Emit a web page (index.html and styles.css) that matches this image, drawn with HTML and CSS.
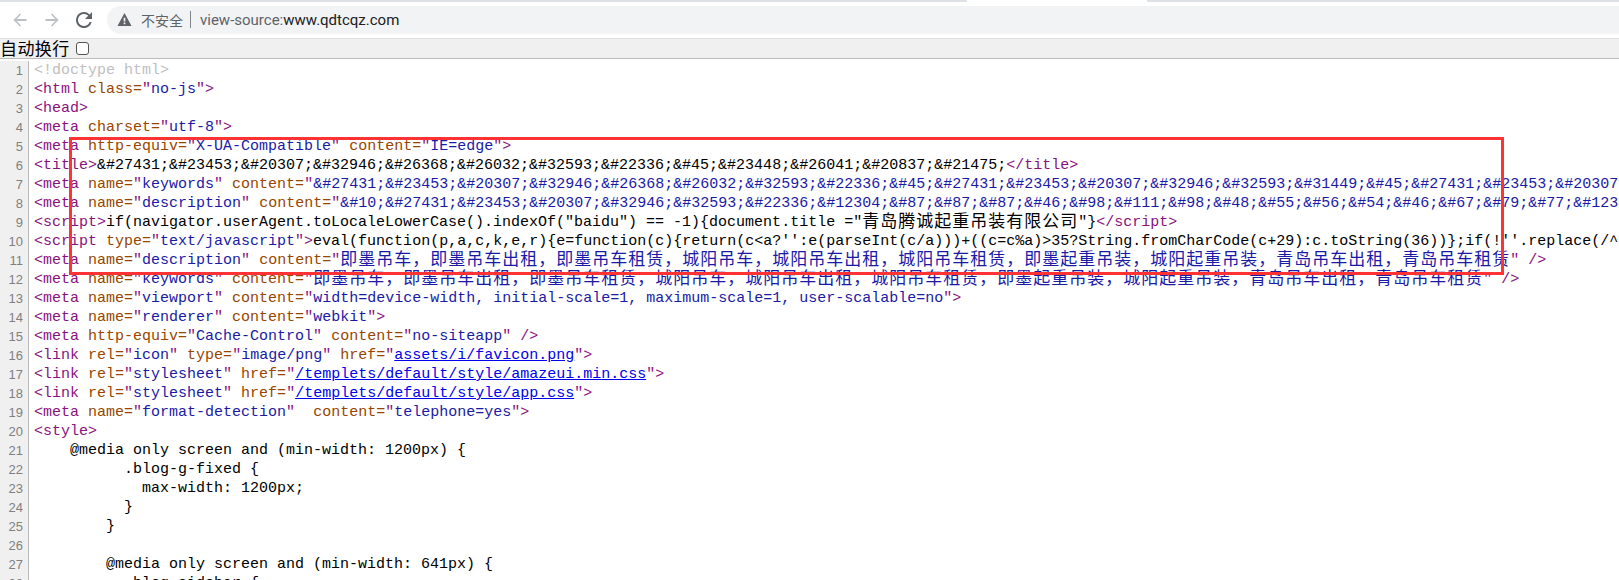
FILE: index.html
```html
<!DOCTYPE html>
<html lang="zh">
<head>
<meta charset="utf-8">
<title>view-source</title>
<link rel="stylesheet" href="styles.css">
</head>
<body>
<div class="tabstrip"><div class="tabgap"></div></div>
<header class="toolbar">
  <svg class="nav" viewBox="0 0 16 16"><path class="muted" d="M14.5 7H4.6l4.5-4.5L8 1.4 1.4 8 8 14.6l1.1-1.1L4.6 9h9.9z"/></svg>
  <svg class="nav" viewBox="0 0 16 16"><path class="muted" d="M1.5 7h9.9L6.9 2.500 8 1.400 14.600 8 8 14.600 6.900 13.500 11.400 9H1.500z"/></svg>
  <svg class="nav" viewBox="0 0 16 16"><path class="dark" d="M13.600 2.400A7.900 7.900 0 0 0 8 0a8 8 0 1 0 7.700 10h-2.100A6 6 0 1 1 8 2c1.700 0 3.100.7 4.200 1.800L9 7h7V0z"/></svg>
  <div class="omnibox">
    <svg class="warn" viewBox="0 0 16 16"><path class="dark" d="M8 1 .5 15h15zM8.900 13H7.100v-1.800h1.800zm0-3H7.100V6h1.800z" fill-rule="evenodd"/></svg>
    <span class="insecure">不安全</span>
    <span class="sep"></span>
    <span class="url"><span class="scheme">view-source:</span>www.qdtcqz.com</span>
  </div>
</header>
<form class="wrapbar"><label class="wraplabel">自动换行 <input class="wrapcheck" type="checkbox"></label></form>
<main class="source">
<div class="row"><span class="num">1</span><span class="code"><span class="c">&lt;!doctype html&gt;</span></span></div>
<div class="row"><span class="num">2</span><span class="code"><span class="t">&lt;html</span> <span class="a">class=</span><span class="t">"</span><span class="v">no-js</span><span class="t">"&gt;</span></span></div>
<div class="row"><span class="num">3</span><span class="code"><span class="t">&lt;head&gt;</span></span></div>
<div class="row"><span class="num">4</span><span class="code"><span class="t">&lt;meta</span> <span class="a">charset=</span><span class="t">"</span><span class="v">utf-8</span><span class="t">"&gt;</span></span></div>
<div class="row"><span class="num">5</span><span class="code"><span class="t">&lt;meta</span> <span class="a">http-equiv=</span><span class="t">"</span><span class="v">X-UA-Compatible</span><span class="t">"</span> <span class="a">content=</span><span class="t">"</span><span class="v">IE=edge</span><span class="t">"&gt;</span></span></div>
<div class="row"><span class="num">6</span><span class="code"><span class="t">&lt;title&gt;</span>&amp;#27431;&amp;#23453;&amp;#20307;&amp;#32946;&amp;#26368;&amp;#26032;&amp;#32593;&amp;#22336;&amp;#45;&amp;#23448;&amp;#26041;&amp;#20837;&amp;#21475;<span class="t">&lt;/title&gt;</span></span></div>
<div class="row"><span class="num">7</span><span class="code"><span class="t">&lt;meta</span> <span class="a">name=</span><span class="t">"</span><span class="v">keywords</span><span class="t">"</span> <span class="a">content=</span><span class="t">"</span><span class="v">&amp;#27431;&amp;#23453;&amp;#20307;&amp;#32946;&amp;#26368;&amp;#26032;&amp;#32593;&amp;#22336;&amp;#45;&amp;#27431;&amp;#23453;&amp;#20307;&amp;#32946;&amp;#32593;&amp;#31449;&amp;#45;&amp;#27431;&amp;#23453;&amp;#20307;&amp;#32946;</span></span></div>
<div class="row"><span class="num">8</span><span class="code"><span class="t">&lt;meta</span> <span class="a">name=</span><span class="t">"</span><span class="v">description</span><span class="t">"</span> <span class="a">content=</span><span class="t">"</span><span class="v">&amp;#10;&amp;#27431;&amp;#23453;&amp;#20307;&amp;#32946;&amp;#32593;&amp;#22336;&amp;#12304;&amp;#87;&amp;#87;&amp;#87;&amp;#46;&amp;#98;&amp;#111;&amp;#98;&amp;#48;&amp;#55;&amp;#56;&amp;#54;&amp;#46;&amp;#67;&amp;#79;&amp;#77;&amp;#123;&amp;#125;</span></span></div>
<div class="row"><span class="num">9</span><span class="code"><span class="t">&lt;script&gt;</span>if(navigator.userAgent.toLocaleLowerCase().indexOf("baidu") == -1){document.title ="<span class="z">青岛腾诚起重吊装有限公司</span>"}<span class="t">&lt;/script&gt;</span></span></div>
<div class="row"><span class="num">10</span><span class="code"><span class="t">&lt;script</span> <span class="a">type=</span><span class="t">"</span><span class="v">text/javascript</span><span class="t">"&gt;</span>eval(function(p,a,c,k,e,r){e=function(c){return(c&lt;a?'':e(parseInt(c/a)))+((c=c%a)&gt;35?String.fromCharCode(c+29):c.toString(36))};if(!''.replace(/^/,String))</span></div>
<div class="row"><span class="num">11</span><span class="code"><span class="t">&lt;meta</span> <span class="a">name=</span><span class="t">"</span><span class="v">description</span><span class="t">"</span> <span class="a">content=</span><span class="t">"</span><span class="v z">即墨吊车，即墨吊车出租，即墨吊车租赁，城阳吊车，城阳吊车出租，城阳吊车租赁，即墨起重吊装，城阳起重吊装，青岛吊车出租，青岛吊车租赁</span><span class="t">" /&gt;</span></span></div>
<div class="row"><span class="num">12</span><span class="code"><span class="t">&lt;meta</span> <span class="a">name=</span><span class="t">"</span><span class="v">keywords</span><span class="t">"</span> <span class="a">content=</span><span class="t">"</span><span class="v z">即墨吊车，即墨吊车出租，即墨吊车租赁，城阳吊车，城阳吊车出租，城阳吊车租赁，即墨起重吊装，城阳起重吊装，青岛吊车出租，青岛吊车租赁</span><span class="t">" /&gt;</span></span></div>
<div class="row"><span class="num">13</span><span class="code"><span class="t">&lt;meta</span> <span class="a">name=</span><span class="t">"</span><span class="v">viewport</span><span class="t">"</span> <span class="a">content=</span><span class="t">"</span><span class="v">width=device-width, initial-scale=1, maximum-scale=1, user-scalable=no</span><span class="t">"&gt;</span></span></div>
<div class="row"><span class="num">14</span><span class="code"><span class="t">&lt;meta</span> <span class="a">name=</span><span class="t">"</span><span class="v">renderer</span><span class="t">"</span> <span class="a">content=</span><span class="t">"</span><span class="v">webkit</span><span class="t">"&gt;</span></span></div>
<div class="row"><span class="num">15</span><span class="code"><span class="t">&lt;meta</span> <span class="a">http-equiv=</span><span class="t">"</span><span class="v">Cache-Control</span><span class="t">"</span> <span class="a">content=</span><span class="t">"</span><span class="v">no-siteapp</span><span class="t">" /&gt;</span></span></div>
<div class="row"><span class="num">16</span><span class="code"><span class="t">&lt;link</span> <span class="a">rel=</span><span class="t">"</span><span class="v">icon</span><span class="t">"</span> <span class="a">type=</span><span class="t">"</span><span class="v">image/png</span><span class="t">"</span> <span class="a">href=</span><span class="t">"</span><span class="l">assets/i/favicon.png</span><span class="t">"&gt;</span></span></div>
<div class="row"><span class="num">17</span><span class="code"><span class="t">&lt;link</span> <span class="a">rel=</span><span class="t">"</span><span class="v">stylesheet</span><span class="t">"</span> <span class="a">href=</span><span class="t">"</span><span class="l">/templets/default/style/amazeui.min.css</span><span class="t">"&gt;</span></span></div>
<div class="row"><span class="num">18</span><span class="code"><span class="t">&lt;link</span> <span class="a">rel=</span><span class="t">"</span><span class="v">stylesheet</span><span class="t">"</span> <span class="a">href=</span><span class="t">"</span><span class="l">/templets/default/style/app.css</span><span class="t">"&gt;</span></span></div>
<div class="row"><span class="num">19</span><span class="code"><span class="t">&lt;meta</span> <span class="a">name=</span><span class="t">"</span><span class="v">format-detection</span><span class="t">"</span>  <span class="a">content=</span><span class="t">"</span><span class="v">telephone=yes</span><span class="t">"&gt;</span></span></div>
<div class="row"><span class="num">20</span><span class="code"><span class="t">&lt;style&gt;</span></span></div>
<div class="row"><span class="num">21</span><span class="code">    @media only screen and (min-width: 1200px) {</span></div>
<div class="row"><span class="num">22</span><span class="code">          .blog-g-fixed {</span></div>
<div class="row"><span class="num">23</span><span class="code">            max-width: 1200px;</span></div>
<div class="row"><span class="num">24</span><span class="code">          }</span></div>
<div class="row"><span class="num">25</span><span class="code">        }</span></div>
<div class="row"><span class="num">26</span><span class="code"></span></div>
<div class="row"><span class="num">27</span><span class="code">        @media only screen and (min-width: 641px) {</span></div>
<div class="row"><span class="num">28</span><span class="code">          .blog-sidebar {</span></div>
</main>
<div class="highlight"></div>
</body>
</html>
```
FILE: styles.css
```css
* { box-sizing: border-box; }
html, body { margin: 0; height: 100%; overflow: hidden; background: #fff; }
body { position: relative; display: flex; flex-direction: column; }

.tabstrip { height: 2px; background: #dee1e6; flex: none; padding-left: 967px; }
.tabgap { width: 180px; height: 2px; background: #fff; }

.toolbar { flex: none; height: 37px; display: flex; align-items: center; padding-left: 12px; gap: 16px; background: #fff; border-bottom: 1px solid #e0e0e0; }
.nav { width: 16px; height: 16px; flex: none; margin-bottom: 1px; }
.muted { fill: #bcbfc3; }
.dark { fill: #5f6368; }

.omnibox { flex: 1; height: 28px; margin-left: -1px; margin-bottom: 1px; background: #f1f3f4; border-radius: 14px 0 0 14px; display: flex; align-items: center; padding-left: 10px; font-family: Roboto, "Noto Sans CJK SC", sans-serif; font-size: 15px; color: #202124; }
.warn { width: 15px; height: 15px; flex: none; margin-right: 9px; }
.insecure { color: #5f6368; font-family: "Noto Sans CJK SC", sans-serif; font-size: 14px; }
.sep { width: 1px; height: 17px; background: #80868b; margin: 0 9px 0 7px; }
.url { color: #202124; }
.scheme { color: #5f6368; }

.wrapbar { flex: none; height: 20px; background: #f0f0f0; border-bottom: 1px solid #bbb; }
.wraplabel { display: flex; align-items: center; gap: 6px; height: 17px; font-family: "Noto Sans CJK SC", sans-serif; font-size: 17px; letter-spacing: 0.4px; line-height: 17px; color: #000; }
.wrapcheck { appearance: none; margin: 2px 0 0; width: 13px; height: 13px; border: 1px solid #555; border-radius: 3px; background: #fff; }

.source { flex: 1; min-height: 0; overflow: hidden; padding-top: 2px; font-family: "Liberation Mono", "Noto Sans CJK SC", monospace; font-size: 15px; color: #000; }
.row { display: flex; height: 19px; line-height: 19px; white-space: pre; }
.num { flex: none; width: 29px; padding-right: 5px; text-align: right; background: #f0f0f0; border-right: 1px solid #bbb; color: #808080; font-family: "Liberation Sans", sans-serif; font-size: 13px; }
.code { flex: none; padding-left: 5px; }

.t { color: #881280; }
.a { color: #994500; }
.v { color: #1a1aa6; }
.c { color: #c0c0c0; }
.l { color: #00e; text-decoration: underline; }
.z { font-family: "Noto Sans CJK SC", sans-serif; font-size: 17px; letter-spacing: 1px; line-height: 0; vertical-align: -1px; }

.highlight { position: absolute; left: 69px; top: 137px; width: 1435px; height: 138px; border: 3px solid #f33; pointer-events: none; }
```
